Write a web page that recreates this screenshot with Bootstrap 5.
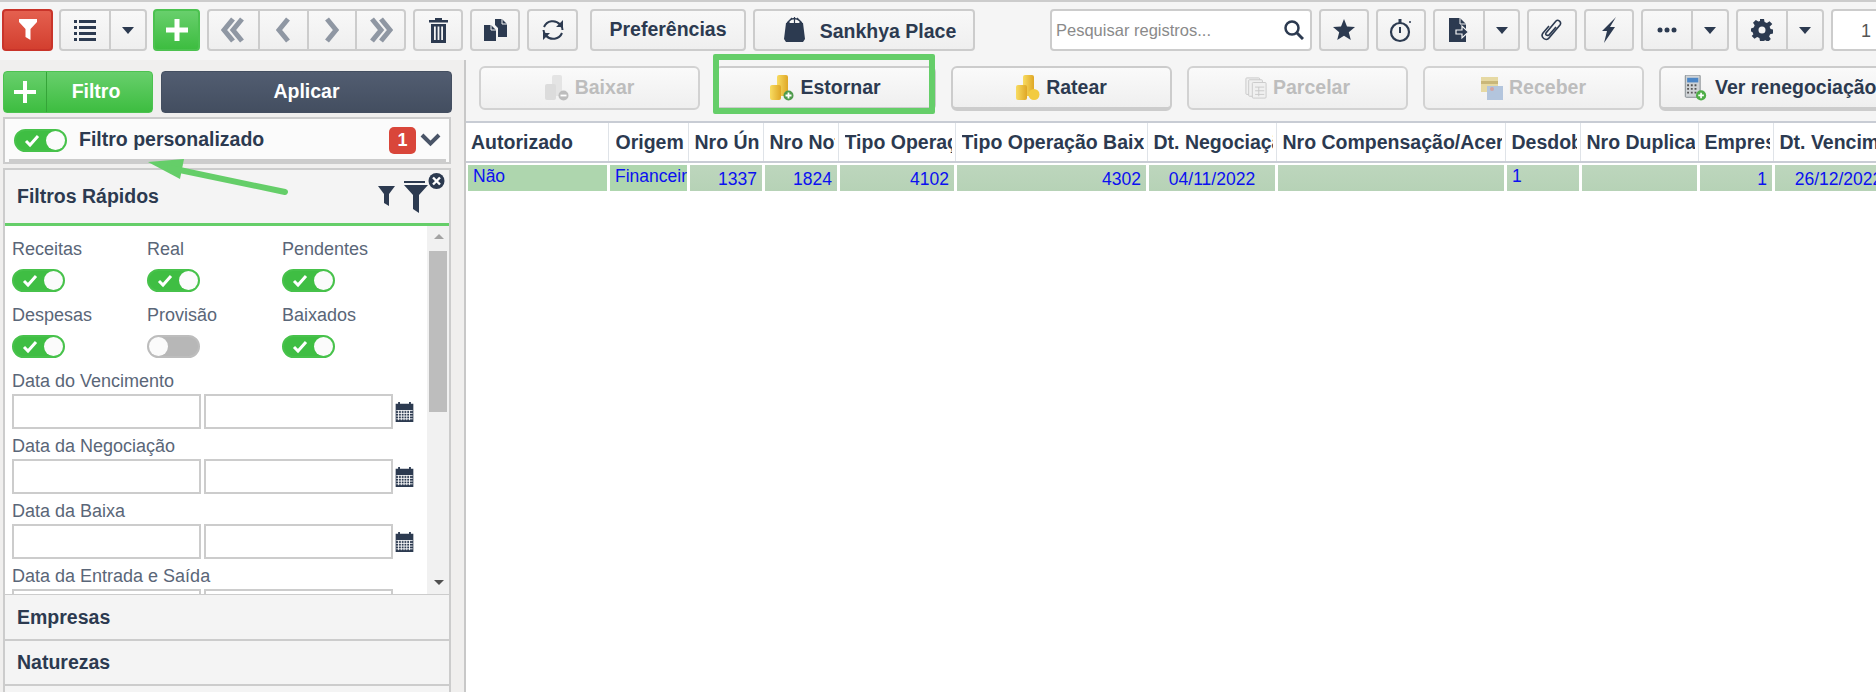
<!DOCTYPE html>
<html lang="pt-BR">
<head>
<meta charset="UTF-8" />
<title>Financeiro</title>
<link href="https://cdn.jsdelivr.net/npm/bootstrap@5.3.0/dist/css/bootstrap.min.css" rel="stylesheet" />
<style>
  html, body { height: 692px; overflow: hidden; }
  body { font-family: "Liberation Sans", Arial, sans-serif; color: #2c3a50; background: #f5f5f5; position: relative; }

  /* barra superior */
  .tb-bar { height: 60px; border-top: 2px solid #ccc; padding: 7px 0 0 2px; gap: 7px; width: 1876px; overflow: hidden; }
  .tb-btn { height: 42px; width: 50px; flex: none; padding: 0; border: 2px solid #ccc; border-radius: 4px; background: linear-gradient(#f8f8f8, #efefef); color: #2c3a50; font-weight: 700; font-size: 19.5px; display: flex; align-items: center; justify-content: center; }
  .tb-btn:hover { background: #eee; border-color: #ccc; color: #2c3a50; }
  .tb-grp { display: flex; flex: none; height: 42px; border: 2px solid #ccc; border-radius: 4px; background: linear-gradient(#f8f8f8, #efefef); }
  .tb-grp > span { display: flex; align-items: center; justify-content: center; height: 100%; }
  .tb-grp > span + span { border-left: 2px solid #ccc; }
  .tb-main { width: 48px; }
  .tb-drop { width: 36px; }
  .tb-drop-sm { width: 35px; }
  .tb-nav { width: 48.75px; }
  .tb-tight { margin-left: -1px; }
  .tb-red { width: 51px; background: linear-gradient(#e4604f, #d33f2f); border-color: #c9342a; }
  .tb-green { width: 47px; background: linear-gradient(#68cf6c, #3dbd40); border-color: #4cc250; }
  .tb-refresh { width: 51px; }
  .w-prefs { width: 156px; margin-left: 5px; }
  .w-place { width: 222px; gap: 15px; padding: 4px 0 0 12px; }
  .w-place svg { margin-top: -5px; }
  .tb-search { width: 262px; height: 42px; flex: none; margin-left: 68px; border: 2px solid #ccc; border-radius: 4px; background: #fff; padding: 0 6px 0 4px; }
  .tb-search input { border: 0; outline: 0; min-width: 0; flex: 1; font-size: 16.5px; font-family: "Liberation Sans", Arial, sans-serif; padding: 0; background: transparent; }
  .tb-search input::placeholder { color: #8a8a8a; }
  .tb-page { width: 60px; height: 42px; flex: none; border: 2px solid #ccc; border-radius: 4px 0 0 4px; background: #fff; font-size: 18px; color: #555; padding: 7px 0 0 28px; }

  /* area */
  .work-area { height: 632px; }
  .filter-side { width: 466px; flex: none; background: #f0efee; border-right: 2px solid #c8c8c8; padding: 11px 0 0 3px; overflow: hidden; }
  .side-top { gap: 8px; width: 449px; }
  .btn-filtro { width: 150px; height: 42px; padding: 0; border: 1px solid #4cc250; border-radius: 4px; background: linear-gradient(#68cf6c, #3dbd40); color: #fff; font-weight: 700; font-size: 19.5px; }
  .btn-filtro:hover { color: #fff; }
  .btn-filtro .plus-part { width: 43px; border-right: 1px solid #35a438; height: 100%; display: flex; align-items: center; justify-content: center; }
  .btn-filtro .label-part { flex: 1; text-align: center; padding-right: 7px; }
  .btn-aplicar { flex: 1; height: 42px; padding: 0; border: 1px solid #444f61; border-radius: 4px; background: linear-gradient(#525d71, #434e60); color: #fff; font-weight: 700; font-size: 19.5px; }
  .btn-aplicar:hover { color: #fff; background: #434e60; }

  .custom-panel { width: 448px; height: 47px; margin-top: 4px; border: 2px solid #ccc; background: #fbfbfb; padding: 0 8px 1px 9px; position: relative; }
  .custom-panel::after { content: ""; position: absolute; left: 4px; right: 3px; bottom: 0; height: 3px; background: #ccc; }
  .custom-title { font-size: 19.5px; font-weight: 700; margin-left: 12px; }
  .count-pill { width: 27px; height: 27px; border-radius: 5px; background: #d9463a; color: #fff; font-weight: 700; font-size: 18px; line-height: 27px; text-align: center; }

  .fast-panel { width: 448px; margin-top: 4px; border: 2px solid #ccc; border-bottom: 0; }
  .fast-head { height: 56px; background: #f4f4f4; border-bottom: 3px solid #65ce69; padding-left: 12px; position: relative; font-size: 19.5px; font-weight: 700; }
  .fast-ico { position: absolute; left: 373px; top: 3px; }
  .fast-body { height: 368px; background: #fff; }
  .fast-scroll { width: 422px; height: 368px; overflow: hidden; padding: 12px 0 0 7px; flex: none; }
  .fake-bar { width: 24px; background: #f1f1f1; position: relative; }
  .fake-thumb { position: absolute; left: 2px; right: 2px; top: 25px; height: 161px; background: #bdbdbd; }
  .arr-up, .arr-down { position: absolute; left: 7px; width: 0; height: 0; border-left: 5px solid transparent; border-right: 5px solid transparent; }
  .arr-up { top: 8px; border-bottom: 5px solid #a3a3a3; }
  .arr-down { top: 354px; border-top: 5px solid #505050; }

  .opt-grid { display: grid; grid-template-columns: 135px 135px 100px; }
  .opt-cell { height: 66px; }
  .opt-label { font-size: 18px; line-height: 22px; color: #5a6678; }
  .sw { display: block; width: 53px; height: 23px; border-radius: 12px; background: #3fbe43; border: 2px solid #47c24b; margin-top: 9px; position: relative; }
  .sw::after { content: ""; position: absolute; right: 0; top: 0; width: 19px; height: 19px; border-radius: 50%; background: #fbfbfb; }
  .sw svg { position: absolute; left: 8px; top: 3px; }
  .sw-off { background: #b7b7b7; border-color: #bdbdbd; }
  .sw-off::after { right: auto; left: 0; }

  .date-block { height: 65px; }
  .date-label { font-size: 18px; line-height: 22px; color: #5a6678; height: 22px; }
  .date-row { gap: 3px; margin-top: 2px; }
  .date-box { width: 189px; height: 35px; border: 2px solid #ccc; background: #fff; flex: none; }
  .date-row svg { margin-left: -1px; margin-top: 8px; flex: none; }

  .acc-row { height: 45px; width: 448px; background: #f4f4f4; border: 2px solid #ccc; border-bottom: 0; padding-left: 12px; font-size: 19.5px; font-weight: 700; line-height: 42px; }
  .acc-row.first-one { border-top-width: 1px; line-height: 44px; }

  .grid-side { flex: 1; min-width: 0; background: #fff; }
  .action-bar { height: 61px; background: #f5f5f5; padding: 6px 0 0 13px; gap: 15px; width: 1410px; position: relative; }
  .act-btn { width: 221px; height: 45px; flex: none; padding: 0; border: 2px solid #ccc; border-bottom-width: 4px; border-radius: 6px; background: linear-gradient(#fafafa, #efefef); color: #2c3a50; font-weight: 700; font-size: 19.5px; gap: 6px; white-space: nowrap; }
  .act-btn:hover { color: #2c3a50; }
  .act-off { height: 44px; border-bottom-width: 2px; color: #bdbdbd; }
  .act-btn:disabled { opacity: 1; color: #bdbdbd; border-color: #d2d2d2; }
  .green-frame { position: absolute; left: 247px; top: -6px; width: 222px; height: 60px; border: 6px solid #65ce69; border-radius: 2px; }
  .act-long { width: 260px; padding-left: 23px; gap: 8px; }

  .grid-tbl { table-layout: fixed; width: 1437px; border-collapse: collapse; margin: 0; }
  .grid-wrap { overflow: hidden; border-top: 2px solid #c8ccd4; height: 571px; }
  .grid-tbl th { height: 39px; vertical-align: middle; font-size: 19.5px; font-weight: 700; color: #2c3a50; background: #fff; padding: 2px 3px 0 6px; border-right: 1px solid #dfe3e8; border-bottom: 2px solid #c8ccd4; white-space: nowrap; }
  .grid-tbl th > span { display: block; overflow: hidden; }
  .grid-tbl th:nth-child(1) { width: 142px; padding-left: 5px; }
  .grid-tbl th:nth-child(2) { width: 80px; padding-left: 7px; }
  .grid-tbl th:nth-child(3), .grid-tbl th:nth-child(4), .grid-tbl th:nth-child(9), .grid-tbl th:nth-child(11) { width: 75px; }
  .grid-tbl th:nth-child(5) { width: 117px; }
  .grid-tbl th:nth-child(6) { width: 192px; }
  .grid-tbl th:nth-child(7) { width: 129px; }
  .grid-tbl th:nth-child(8) { width: 229px; }
  .grid-tbl th:nth-child(10) { width: 118px; }
  .grid-tbl th:nth-child(12) { width: 130px; }
  .grid-tbl td { height: 28px; padding: 0; border: 0; background: #fff; vertical-align: top; }
  .cell-fill { display: block; height: 26px; margin: 2px 1px 0 2px; padding: 1px 5px 0; background: linear-gradient(#bdd6bd, #b6d2b6); color: #0b10f0; font-size: 17.5px; line-height: 21px; white-space: nowrap; overflow: hidden; }
  .cell-first { background: #aed6ae; }
  .cell-right { text-align: right; padding-top: 4px; }
  .cell-center { text-align: center; padding-top: 4px; }

  .svg-defs { position: absolute; width: 0; height: 0; }
  .hint-arrow { position: absolute; left: 0; top: 0; pointer-events: none; }
</style>
</head>
<body>
  <svg class="svg-defs">
    <defs><linearGradient id="gold" x1="0" x2="1" y1="0" y2="0"><stop offset="0" stop-color="#f8dc62"/><stop offset="1" stop-color="#dfa726"/></linearGradient></defs>
    <symbol id="cal" viewBox="0 0 20 22"><path fill="#2c3a50" d="M3 0h2v2h10V0h2v2h3v20H0V2h3z"/><path stroke="#fff" stroke-width="1" d="M1 9.500h18M1 12.500h18M1 15.500h18M1 18.500h18M3.500 9v11M6.500 9v11M9.500 9v11M12.500 9v11M15.500 9v11"/></symbol>
    <symbol id="coins" viewBox="0 0 24 26"><rect x="7" y="0" width="11" height="21" rx="2" fill="url(#gold)"/><rect x="0" y="10" width="11" height="15" rx="2" fill="url(#gold)"/></symbol>
  </svg>

  <div class="tb-bar d-flex align-items-start">
    <button class="btn tb-btn tb-red" type="button"><svg width="20" height="24" viewBox="0 0 20 24"><path fill="#fff" d="M1 1h18v3l-6.500 7v11l-5-3v-8L1 4z"/></svg></button>
    <div class="tb-grp tb-tight">
      <span class="tb-main"><svg width="22" height="22" viewBox="0 0 22 22" fill="#2c3a50"><path d="M0 1h3v3H0zM5 1h17v3H5zM0 7h3v3H0zM5 7h17v3H5zM0 13h3v3H0zM5 13h17v3H5zM0 19h3v3H0zM5 19h17v3H5z"/></svg></span>
      <span class="tb-drop"><svg width="12" height="7" viewBox="0 0 12 7"><path fill="#2c3a50" d="M0 0h12L6 7z"/></svg></span>
    </div>
    <button class="btn tb-btn tb-green tb-tight" type="button"><svg width="22" height="22" viewBox="0 0 22 22"><path fill="#fff" d="M8.500 0h5v8.500H22v5h-8.500V22h-5v-8.500H0v-5h8.500z"/></svg></button>
    <div class="tb-grp">
      <span class="tb-nav"><svg width="24" height="26" viewBox="0 0 24 26" fill="none" stroke="#8f97a3" stroke-width="5"><path d="M12 2 3 13l9 11M21 2l-9 11 9 11"/></svg></span>
      <span class="tb-nav"><svg width="14" height="26" viewBox="0 0 14 26" fill="none" stroke="#8f97a3" stroke-width="5"><path d="M12 2 3 13l9 11"/></svg></span>
      <span class="tb-nav"><svg width="14" height="26" viewBox="0 0 14 26" fill="none" stroke="#8f97a3" stroke-width="5"><path d="m2 2 9 11-9 11"/></svg></span>
      <span class="tb-nav"><svg width="24" height="26" viewBox="0 0 24 26" fill="none" stroke="#8f97a3" stroke-width="5"><path d="m3 2 9 11-9 11M12 2l9 11-9 11"/></svg></span>
    </div>
    <button class="btn tb-btn" type="button"><svg width="19" height="25" viewBox="0 0 19 25" fill="#2c3a50"><path d="M6 0h7v2h6v2.500H0V2h6zM2 6h15v19H2zm3 2.500V22h1.800V8.500zm3.600 0V22h1.800V8.500zm3.600 0V22H14V8.500z" fill-rule="evenodd"/></svg></button>
    <button class="btn tb-btn" type="button"><svg width="23" height="22" viewBox="0 0 23 22"><path fill="#2c3a50" d="M11 0h7l5 5v13h-9V9l-3-3z"/><path fill="#2c3a50" d="M0 6h7l5 5v11H0z"/><path fill="none" stroke="#f5f5f5" d="M18 0v5h5M7 6v5h5"/></svg></button>
    <button class="btn tb-btn tb-refresh" type="button"><svg width="24" height="24" viewBox="0 0 24 24" fill="none" stroke="#2c3a50" stroke-width="2"><path d="M19 6.500A9.500 9.500 0 0 0 3 9M5 17.500A9.500 9.500 0 0 0 21 15"/><path d="M2.500 12c0 2 1 4 2.500 5.500M21.500 12c0-2-1-4-2.500-5.500"/><path fill="#2c3a50" stroke="none" d="M22 2v7h-7zM2 22v-7h7z"/></svg></button>
    <button class="btn tb-btn w-prefs" type="button">Preferências</button>
    <button class="btn tb-btn w-place" type="button"><svg width="21" height="25" viewBox="0 0 21 25"><path fill="#2c3a50" d="M2 6h17l2 16-2 3H2l-2-3z"/><path fill="none" stroke="#2c3a50" stroke-width="1.200" d="M5 6V4q5-5 11 0v2M3 6l5-5m5 0 5 5M10.500 0v6"/></svg>Sankhya Place</button>
    <div class="tb-search d-flex align-items-center">
      <input type="text" placeholder="Pesquisar registros..." />
      <svg width="20" height="20" viewBox="0 0 20 20" fill="none" stroke="#2c3a50" stroke-width="2.500"><circle cx="8" cy="8" r="6.500"/><path d="m12.500 12.500 6.500 6.500" stroke-width="3"/></svg>
    </div>
    <button class="btn tb-btn" type="button"><svg width="22" height="22" viewBox="0 0 22 22"><path fill="#2c3a50" d="m11 0 3 7.500 8 .6-6.200 5.100 2 7.800L11 16.700 4.200 21l2-7.800L0 8.100l8-.6z"/></svg></button>
    <button class="btn tb-btn" type="button"><svg width="24" height="26" viewBox="0 0 24 26" fill="none" stroke="#2c3a50" stroke-width="2.200"><circle cx="11" cy="15" r="9"/><path d="M11 10v6" stroke-width="2"/><path d="M11 2v4" stroke-width="3"/><circle cx="21" cy="5" r="1" fill="#2c3a50" stroke="none"/></svg></button>
    <div class="tb-grp">
      <span class="tb-main"><svg width="20" height="24" viewBox="0 0 20 24"><path fill="#2c3a50" d="M0 0h11l6 6v18H0z"/><path fill="none" stroke="#f5f5f5" d="M11 0v6h6"/><path fill="#2c3a50" stroke="#f5f5f5" stroke-width="1.200" d="M7 12h6V8l6.500 6-6.500 6v-4H7z"/></svg></span>
      <span class="tb-drop-sm"><svg width="12" height="7" viewBox="0 0 12 7"><path fill="#2c3a50" d="M0 0h12L6 7z"/></svg></span>
    </div>
    <button class="btn tb-btn" type="button"><svg width="24" height="25" viewBox="0 0 24 25" fill="none" stroke="#2c3a50" stroke-width="1.600"><path d="M9 8 3 15c-3 4 3 9 6 5l11-13c2-3-2-6-4-4L6 15c-1 2 1 3 3 2l7-8"/></svg></button>
    <button class="btn tb-btn" type="button"><svg width="14" height="26" viewBox="0 0 14 26"><path fill="#2c3a50" d="M14 0 8 10h5L2 26 5 14H0z"/></svg></button>
    <div class="tb-grp">
      <span class="tb-main"><svg width="20" height="6" viewBox="0 0 20 6" fill="#2c3a50"><circle cx="3" cy="3" r="2.500"/><circle cx="10" cy="3" r="2.500"/><circle cx="17" cy="3" r="2.500"/></svg></span>
      <span class="tb-drop"><svg width="12" height="7" viewBox="0 0 12 7"><path fill="#2c3a50" d="M0 0h12L6 7z"/></svg></span>
    </div>
    <div class="tb-grp">
      <span class="tb-main"><svg width="22" height="22" viewBox="0 0 22 22"><path fill="#2c3a50" fill-rule="evenodd" d="M9 0h4l.6 3 2.300 1 2.600-1.700 2.800 2.800L18.600 7.700l1 2.300 2.400.6v4l-2.900.6-1 2.300 1.700 2.600-2.800 2.800-2.600-1.700-2.300 1L13 22H9l-.6-3-2.300-1-2.600 1.700-2.800-2.800L2.400 15.300l-1-2.300L0 12.400v-3l2.700-.8 1-2.300L2 3.700 4.800.9l2.600 1.700L9 2zM11 7.500a3.500 3.500 0 1 0 0 7 3.500 3.500 0 0 0 0-7z"/></svg></span>
      <span class="tb-drop"><svg width="12" height="7" viewBox="0 0 12 7"><path fill="#2c3a50" d="M0 0h12L6 7z"/></svg></span>
    </div>
    <div class="tb-page">1</div>
  </div>

  <div class="work-area d-flex">
    <aside class="filter-side">
      <div class="side-top d-flex">
        <button class="btn btn-filtro d-flex align-items-center" type="button">
          <span class="plus-part"><svg width="22" height="22" viewBox="0 0 22 22"><path fill="#fff" d="M9 0h4v9h9v4h-9v9H9v-9H0V9h9z"/></svg></span>
          <span class="label-part">Filtro</span>
        </button>
        <button class="btn btn-aplicar" type="button">Aplicar</button>
      </div>
      <div class="custom-panel d-flex align-items-center">
        <span class="sw m-0"><svg width="16" height="14" viewBox="0 0 16 14"><path fill="none" stroke="#fff" stroke-width="3" d="m2 7 4 4 8-9"/></svg></span>
        <span class="custom-title">Filtro personalizado</span>
        <span class="count-pill ms-auto">1</span>
        <svg class="ms-1" width="21" height="14" viewBox="0 0 21 14" fill="none" stroke="#4a5568" stroke-width="4"><path d="m2 2 8.500 8.500L19 2"/></svg>
      </div>
      <div class="fast-panel">
        <div class="fast-head d-flex align-items-center">
          Filtros Rápidos
          <svg class="fast-ico" width="70" height="44" viewBox="0 0 70 44"><path fill="#2c3a50" d="M0 13h17l-6 8v12l-5-3v-9z"/><path fill="#2c3a50" d="M26 8h21v2H26zM26 12h24l-9 10v18l-6-4V22z"/><circle cx="58.500" cy="8" r="8" fill="#2c3a50"/><path stroke="#fff" stroke-width="2.400" d="m55 4.500 7 7m0-7-7 7"/></svg>
        </div>
        <div class="fast-body d-flex">
          <div class="fast-scroll">
            <div class="opt-grid">
              <div class="opt-cell"><div class="opt-label">Receitas</div><span class="sw"><svg width="16" height="14" viewBox="0 0 16 14"><path fill="none" stroke="#fff" stroke-width="3" d="m2 7 4 4 8-9"/></svg></span></div>
              <div class="opt-cell"><div class="opt-label">Real</div><span class="sw"><svg width="16" height="14" viewBox="0 0 16 14"><path fill="none" stroke="#fff" stroke-width="3" d="m2 7 4 4 8-9"/></svg></span></div>
              <div class="opt-cell"><div class="opt-label">Pendentes</div><span class="sw"><svg width="16" height="14" viewBox="0 0 16 14"><path fill="none" stroke="#fff" stroke-width="3" d="m2 7 4 4 8-9"/></svg></span></div>
              <div class="opt-cell"><div class="opt-label">Despesas</div><span class="sw"><svg width="16" height="14" viewBox="0 0 16 14"><path fill="none" stroke="#fff" stroke-width="3" d="m2 7 4 4 8-9"/></svg></span></div>
              <div class="opt-cell"><div class="opt-label">Provisão</div><span class="sw sw-off"></span></div>
              <div class="opt-cell"><div class="opt-label">Baixados</div><span class="sw"><svg width="16" height="14" viewBox="0 0 16 14"><path fill="none" stroke="#fff" stroke-width="3" d="m2 7 4 4 8-9"/></svg></span></div>
            </div>
            <div class="date-block"><div class="date-label">Data do Vencimento</div><div class="date-row d-flex"><div class="date-box"></div><div class="date-box"></div><svg width="19" height="20" viewBox="0 0 20 22"><use href="#cal"/></svg></div></div>
            <div class="date-block"><div class="date-label">Data da Negociação</div><div class="date-row d-flex"><div class="date-box"></div><div class="date-box"></div><svg width="19" height="20" viewBox="0 0 20 22"><use href="#cal"/></svg></div></div>
            <div class="date-block"><div class="date-label">Data da Baixa</div><div class="date-row d-flex"><div class="date-box"></div><div class="date-box"></div><svg width="19" height="20" viewBox="0 0 20 22"><use href="#cal"/></svg></div></div>
            <div class="date-block"><div class="date-label">Data da Entrada e Saída</div><div class="date-row d-flex"><div class="date-box"></div><div class="date-box"></div><svg width="19" height="20" viewBox="0 0 20 22"><use href="#cal"/></svg></div></div>
          </div>
          <div class="fake-bar flex-grow-1"><span class="arr-up"></span><span class="fake-thumb"></span><span class="arr-down"></span></div>
        </div>
      </div>
      <div class="acc-row first-one">Empresas</div>
      <div class="acc-row">Naturezas</div>
      <div class="acc-row"></div>
    </aside>

    <main class="grid-side">
      <div class="action-bar d-flex align-items-start">
        <button class="btn act-btn act-off d-flex align-items-center justify-content-center" type="button" disabled>
          <svg width="24" height="26" viewBox="0 0 24 26"><rect x="7" y="0" width="10" height="21" rx="2" fill="#e4e4e4"/><rect x="0" y="9" width="11" height="16" rx="2" fill="#dcdcdc"/><circle cx="18.500" cy="20.500" r="5" fill="#bdbdbd"/><path stroke="#fff" stroke-width="1.800" d="M15.500 20.500h6"/></svg>Baixar</button>
        <button class="btn act-btn d-flex align-items-center justify-content-center" type="button">
          <svg width="24" height="26" viewBox="0 0 24 26"><use href="#coins"/><circle cx="18.500" cy="20.500" r="5" fill="#4e9a4c"/><path stroke="#fff" stroke-width="1.800" d="M15.500 20.500h6M18.500 17.500v6"/></svg>Estornar</button>
        <button class="btn act-btn d-flex align-items-center justify-content-center" type="button">
          <svg width="24" height="26" viewBox="0 0 24 26"><use href="#coins"/><circle cx="18" cy="19.500" r="5.500" fill="#f2cb3f"/></svg>Ratear</button>
        <button class="btn act-btn act-off d-flex align-items-center justify-content-center" type="button" disabled>
          <svg width="22" height="22" viewBox="0 0 24 24" fill="#f0f0f0" stroke="#c8c8c8"><rect x="1" y="1" width="15" height="18" rx="1"/><rect x="4" y="3" width="15" height="18" rx="1"/><rect x="8" y="6" width="15" height="17" rx="1"/><path d="M11 11h10M11 15h10M11 19h10M15 11v10"/></svg>Parcelar</button>
        <button class="btn act-btn act-off d-flex align-items-center justify-content-center" type="button" disabled>
          <svg width="22" height="23" viewBox="0 0 22 23"><rect x="0" y="0" width="17" height="15" fill="#e6d9a3"/><rect x="0" y="4" width="17" height="3" fill="#c9b779"/><rect x="6" y="9" width="16" height="14" fill="#b3c5dd"/><circle cx="11" cy="12" r="2" fill="#d3a3a3"/></svg>Receber</button>
        <button class="btn act-btn act-long d-flex align-items-center justify-content-start" type="button">
          <svg width="23" height="26" viewBox="0 0 24 28"><rect x="1" y="0" width="16" height="24" rx="1" fill="#cfd3d6" stroke="#7f878c"/><rect x="3" y="3" width="12" height="5" fill="#4c86c6"/><path stroke="#555" stroke-width="2" stroke-dasharray="2 2" d="M3 11h12M3 15h12M3 19h12"/><circle cx="18" cy="22" r="5.500" fill="#4eae47"/><path stroke="#fff" stroke-width="1.800" d="M15 22h6M18 19v6"/></svg>Ver renegociação</button>
        <div class="green-frame"></div>
      </div>
      <div class="grid-wrap">
        <table class="table grid-tbl">
          <thead>
            <tr><th><span>Autorizado</span></th><th><span>Origem</span></th><th><span>Nro Único</span></th><th><span>Nro Nota</span></th><th><span>Tipo Operação</span></th><th><span>Tipo Operação Baixa</span></th><th><span>Dt. Negociação</span></th><th><span>Nro Compensação/Acerto</span></th><th><span>Desdobramento</span></th><th><span>Nro Duplicata</span></th><th><span>Empresa</span></th><th><span>Dt. Vencimento</span></th></tr>
          </thead>
          <tbody>
            <tr>
              <td><span class="cell-fill cell-first">Não</span></td>
              <td><span class="cell-fill cell-first">Financeiro</span></td>
              <td><span class="cell-fill cell-right">1337</span></td>
              <td><span class="cell-fill cell-right">1824</span></td>
              <td><span class="cell-fill cell-right">4102</span></td>
              <td><span class="cell-fill cell-right">4302</span></td>
              <td><span class="cell-fill cell-center">04/11/2022</span></td>
              <td><span class="cell-fill"></span></td>
              <td><span class="cell-fill">1</span></td>
              <td><span class="cell-fill"></span></td>
              <td><span class="cell-fill cell-right">1</span></td>
              <td><span class="cell-fill cell-center">26/12/2022</span></td>
            </tr>
          </tbody>
        </table>
      </div>
    </main>
  </div>

  <!-- seta de destaque -->
  <svg class="hint-arrow" width="300" height="200" viewBox="0 0 300 200"><path d="M148 162 184 159 180 179z" fill="#65ce69"/><path d="M170 168 285 192" stroke="#65ce69" stroke-width="6" stroke-linecap="round"/></svg>
</body>
</html>
